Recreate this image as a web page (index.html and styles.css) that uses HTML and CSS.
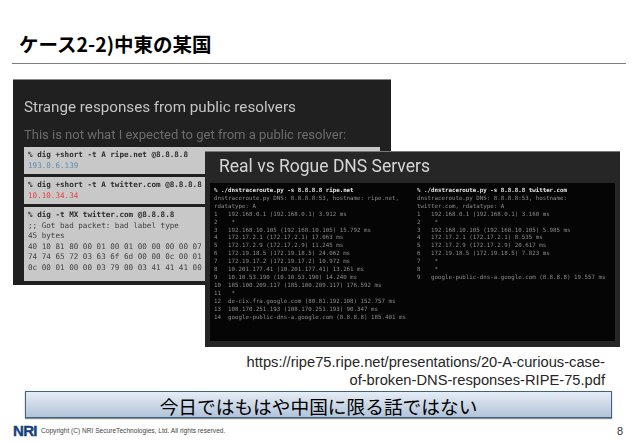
FILE: index.html
```html
<!DOCTYPE html>
<html lang="ja">
<head>
<meta charset="utf-8">
<title>ケース2-2)中東の某国</title>
<link rel="stylesheet" href="styles.css">
</head>
<body>
<main class="slide">
  <h1 class="title">ケース2-2)中東の某国</h1>
  <hr class="rule">
  <section class="shots">
    <div class="shot-a">
      <h2 class="a-head">Strange responses from public resolvers</h2>
      <p class="a-sub">This is not what I expected to get from a public resolver:</p>
      <div class="term"><b>% dig +short -t A ripe.net @8.8.8.8</b><br><span class="blue">193.0.6.139</span></div>
      <div class="term"><b>% dig +short -t A twitter.com @8.8.8.8</b><br><span class="red">10.10.34.34</span></div>
      <div class="term term-log"><b>% dig -t MX twitter.com @8.8.8.8</b><br>;; Got bad packet: bad label type<br>45 bytes<br>40 10 81 80 00 01 00 01 00 00 00 00 07<br>74 74 65 72 03 63 6f 6d 00 00 0c 00 01<br>0c 00 01 00 00 03 79 00 03 41 41 41 00</div>
    </div>
    <div class="shot-b">
      <h2 class="b-head">Real vs Rogue DNS Servers</h2>
      <div class="b-body">
<pre class="trace"><b>% ./dnstraceroute.py -s 8.8.8.8 ripe.net</b>
dnstraceroute.py DNS: 8.8.8.8:53, hostname: ripe.net,
rdatatype: A
1   192.168.0.1 (192.168.0.1) 3.912 ms
2    *
3   192.168.10.105 (192.168.10.105) 15.792 ms
4   172.17.2.1 (172.17.2.1) 17.063 ms
5   172.17.2.9 (172.17.2.9) 11.245 ms
6   172.19.18.5 (172.19.18.5) 24.062 ms
7   172.19.17.2 (172.19.17.2) 10.972 ms
8   10.201.177.41 (10.201.177.41) 13.261 ms
9   10.10.53.190 (10.10.53.190) 14.240 ms
10  185.100.209.117 (185.100.209.117) 176.592 ms
11   *
12  de-cix.fra.google.com (80.81.192.108) 152.757 ms
13  108.170.251.193 (108.170.251.193) 90.347 ms
14  google-public-dns-a.google.com (8.8.8.8) 185.401 ms</pre>
<pre class="trace"><b>% ./dnstraceroute.py -s 8.8.8.8 twitter.com</b>
dnstraceroute.py DNS: 8.8.8.8:53, hostname:
twitter.com, rdatatype: A
1   192.168.0.1 (192.168.0.1) 3.160 ms
2    *
3   192.168.10.105 (192.168.10.105) 5.985 ms
4   172.17.2.1 (172.17.2.1) 8.535 ms
5   172.17.2.9 (172.17.2.9) 20.617 ms
6   172.19.18.5 (172.19.18.5) 7.823 ms
7    *
8    *
9   google-public-dns-a.google.com (8.8.8.8) 19.557 ms</pre>
      </div>
    </div>
  </section>
  <p class="source">https://ripe75.ripe.net/presentations/20-A-curious-case-<br>of-broken-DNS-responses-RIPE-75.pdf</p>
  <div class="banner">今日ではもはや中国に限る話ではない</div>
  <footer class="foot">
    <span class="logo">NRI</span>
    <span class="copy">Copyright (C) NRI SecureTechnologies, Ltd. All rights reserved.</span>
    <span class="page">8</span>
  </footer>
</main>
</body>
</html>
```
FILE: styles.css
```css
* { box-sizing: border-box; }
html, body { margin: 0; background: #fff; }
.slide {
  position: relative;
  width: 638px;
  height: 442px;
  overflow: hidden;
  padding: 0 12px;
  font-family: "Liberation Sans", "Noto Sans CJK JP", sans-serif;
  color: #000;
}
.title {
  margin: 0;
  padding: 31px 0 0 7px;
  height: 63px;
  font-size: 19.5px;
  line-height: 26px;
  font-weight: 700;
  font-family: "Noto Sans CJK JP", sans-serif;
  white-space: nowrap;
}
.rule { margin: 0; border: 0; height: 1px; background: #7f7f7f; }
.shots { position: relative; height: 285px; margin-top: 15px; filter: blur(0.45px); }
.shot-a {
  width: 378px;
  height: 206px;
  margin-left: 1px;
  padding: 17px 0 0 11px;
  background: #202020;
  border-top: 1px solid #8a8a8a;
  overflow: hidden;
}
.a-head {
  margin: 0;
  font: 400 15.2px/20px Roboto, sans-serif;
  color: #c5c5c5;
  white-space: nowrap;
}
.a-sub {
  margin: 10px 0 4px;
  font: 400 13px/16px Roboto, sans-serif;
  color: #6c6c6c;
  white-space: nowrap;
}
.term {
  width: 356px;
  margin-bottom: 3px;
  padding: 3px 4px;
  background: #c8c8c8;
  color: #3f3f3f;
  font: 400 7.6px/10.5px "DejaVu Sans Mono", monospace;
  white-space: nowrap;
}
.term-log { padding-bottom: 8px; }
.term b { color: #2c2c2c; }
.blue { color: #5a8db5; }
.red { color: #e2433f; }
.shot-b {
  position: absolute;
  left: 193px;
  top: 72px;
  width: 415px;
  height: 196px;
  padding: 0 5px 6px;
  background: #262626;
  border-top: 1px solid #777;
}
.b-head {
  margin: 0;
  height: 31px;
  padding: 2px 0 0 9px;
  font: 400 17.5px/24px Roboto, sans-serif;
  color: #d6d6d6;
  white-space: nowrap;
}
.b-body {
  display: grid;
  grid-template-columns: 203px 1fr;
  height: 158px;
  padding: 4px 0 0 4px;
  background: #050505;
}
.trace {
  margin: 0;
  font: 400 5.8px/7.9px "DejaVu Sans Mono", monospace;
  color: #8a8a8a;
  white-space: pre;
}
.trace b { color: #e6e6e6; }
.source {
  position: absolute;
  top: 353px;
  right: 33px;
  margin: 0;
  text-align: right;
  font-size: 14.7px;
  line-height: 18px;
  color: #262626;
  white-space: nowrap;
}
.banner {
  position: absolute;
  left: 25px;
  top: 391px;
  width: 587px;
  height: 27px;
  border: 1px solid #3f6480;
  background: linear-gradient(#e6ecf5, #b2c4d9);
  box-shadow: 0 1px 1px #8a8a8a;
  text-align: center;
  font-size: 18.7px;
  line-height: 27px;
  font-family: "Noto Sans CJK JP", sans-serif;
  white-space: nowrap;
}
.foot {
  position: absolute;
  left: 13px;
  right: 0;
  top: 423px;
  display: flex;
  align-items: center;
  height: 15px;
}
.logo {
  width: 28px;
  font: 700 15px/15px "Liberation Sans", sans-serif;
  letter-spacing: -0.7px;
  color: #17417e;
  -webkit-text-stroke: 0.4px #17417e;
}
.copy {
  font-size: 6.6px;
  color: #444;
}
.page {
  margin-left: auto;
  margin-right: 15px;
  font-size: 11px;
  color: #333;
}
```
